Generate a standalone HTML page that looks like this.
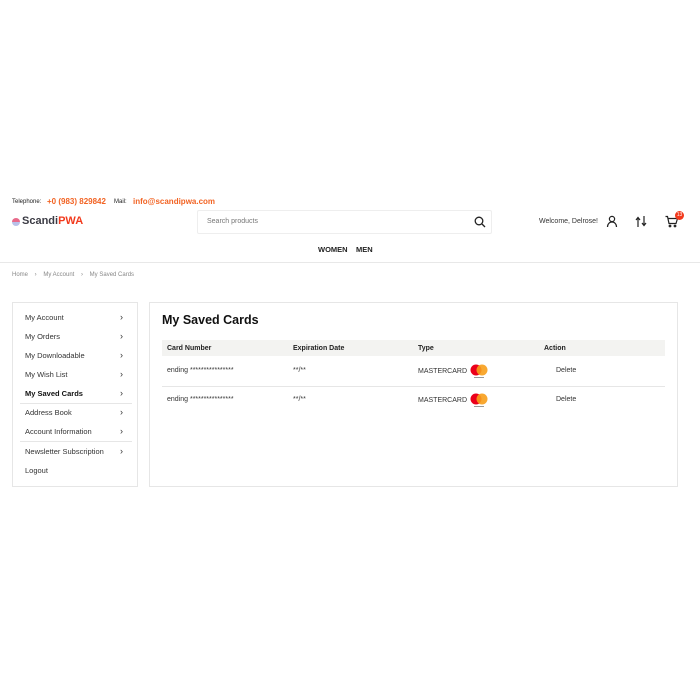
<!DOCTYPE html>
<html><head><style>
body{margin:0;width:700px;height:700px;background:#fff;font-family:"Liberation Sans",sans-serif;color:#222;position:relative;overflow:hidden}
.a{position:absolute;white-space:nowrap}
.or{color:#f26323;font-weight:bold}
.side div.i{position:absolute;left:12px;font-size:7.5px;color:#333}
.chev{position:absolute;left:107px;font-size:9px;color:#333}
.th{position:absolute;top:0;font-size:7px;font-weight:bold;line-height:16px}
.td{position:absolute;font-size:7px;color:#333}
</style></head><body>
<div class="a" style="left:12px;top:199px;font-size:6px;color:#222">Telephone:</div>
<div class="a or" style="left:47px;top:197px;font-size:8px">+0 (983) 829842</div>
<div class="a" style="left:114px;top:199px;font-size:6px">Mail:</div>
<div class="a or" style="left:133px;top:197px;font-size:8px">info@scandipwa.com</div>
<div class="a" style="left:12px;top:218px;width:8px;height:8px;border-radius:50%;background:linear-gradient(#e86a8a 50%,#b8c0e8 50%)"></div>
<div class="a" style="left:22px;top:215px;font-size:11px;font-weight:bold;color:#3b3b44">Scandi<span style="color:#f23a1d">PWA</span></div>
<div class="a" style="left:197px;top:210px;width:295px;height:24px;border:1px solid #eee;border-radius:2px;box-sizing:border-box"></div>
<div class="a" style="left:207px;top:218px;font-size:7px;color:#777">Search products</div>
<svg class="a" style="left:474px;top:216px" width="12" height="12" viewBox="0 0 12 12" fill="none" stroke="#222" stroke-width="1.3"><circle cx="5" cy="5" r="3.8"/><path d="M8 8l3 3"/></svg>
<div class="a" style="left:539px;top:218px;font-size:7px;color:#333">Welcome, Delrose!</div>
<svg class="a" style="left:606px;top:215px" width="12" height="13" viewBox="0 0 12 13" fill="none" stroke="#222" stroke-width="1.2"><circle cx="6" cy="4" r="2.6"/><path d="M1.5 12c0-3 2-5 4.5-5s4.5 2 4.5 5"/></svg>
<svg class="a" style="left:635px;top:215px" width="12" height="13" viewBox="0 0 12 13" fill="none" stroke="#222" stroke-width="1.2"><path d="M3 12V3M1 5l2-2.5L5 5M9 1v9M7 8l2 2.5L11 8"/></svg>
<svg class="a" style="left:665px;top:215px" width="13" height="13" viewBox="0 0 13 13" fill="none" stroke="#222" stroke-width="1.2"><path d="M0.5 1.5h2l1.5 7h7l1.5-5H3"/><circle cx="5" cy="11" r="0.8"/><circle cx="10" cy="11" r="0.8"/></svg>
<div class="a" style="left:675px;top:211px;width:9px;height:9px;border-radius:50%;background:#f23a1d;color:#fff;font-size:5px;text-align:center;line-height:9px">13</div>
<div class="a" style="left:318px;top:245px;font-size:7.5px;font-weight:bold">WOMEN</div>
<div class="a" style="left:356px;top:245px;font-size:7.5px;font-weight:bold">MEN</div>
<div class="a" style="left:0;top:262px;width:700px;height:1px;background:#e8e8e8"></div>
<div class="a" style="left:12px;top:272px;font-size:6px;color:#888">Home &nbsp;&nbsp;&nbsp;›&nbsp;&nbsp;&nbsp; My Account &nbsp;&nbsp;&nbsp;›&nbsp;&nbsp;&nbsp; My Saved Cards</div>
<div class="a side" style="left:12px;top:302px;width:126px;height:185px;border:1px solid #e6e6e6;box-sizing:border-box">
<div class="i" style="top:10px">My Account</div><div class="chev" style="top:9px">›</div>
<div class="i" style="top:29px">My Orders</div><div class="chev" style="top:28px">›</div>
<div class="i" style="top:48px">My Downloadable</div><div class="chev" style="top:47px">›</div>
<div class="i" style="top:67px">My Wish List</div><div class="chev" style="top:66px">›</div>
<div class="i" style="top:86px;font-weight:bold;color:#111">My Saved Cards</div><div class="chev" style="top:85px">›</div>
<div style="position:absolute;left:7px;top:100px;width:112px;height:1px;background:#e6e6e6"></div>
<div class="i" style="top:105px">Address Book</div><div class="chev" style="top:104px">›</div>
<div class="i" style="top:124px">Account Information</div><div class="chev" style="top:123px">›</div>
<div style="position:absolute;left:7px;top:138px;width:112px;height:1px;background:#e6e6e6"></div>
<div class="i" style="top:144px">Newsletter Subscription</div><div class="chev" style="top:143px">›</div>
<div class="i" style="top:163px">Logout</div>
</div>
<div class="a" style="left:149px;top:302px;width:529px;height:185px;border:1px solid #e6e6e6;box-sizing:border-box"></div>
<div class="a" style="left:162px;top:313px;font-size:12.5px;font-weight:bold;color:#111">My Saved Cards</div>
<div class="a" style="left:162px;top:340px;width:503px;height:16px;background:#f3f3f1">
<div class="th" style="left:5px;top:1px">Card Number</div><div class="th" style="left:131px;top:1px">Expiration Date</div><div class="th" style="left:256px;top:1px">Type</div><div class="th" style="left:382px;top:1px">Action</div></div>
<div class="a" style="left:162px;top:386px;width:503px;height:1px;background:#e6e6e6"></div>
<div class="td" style="left:167px;top:367px">ending ****************</div>
<div class="td" style="left:293px;top:367px">**/**</div>
<div class="td" style="left:418px;top:368px">MASTERCARD</div>
<div class="td" style="left:556px;top:367px">Delete</div>
<div class="td" style="left:167px;top:396px">ending ****************</div>
<div class="td" style="left:293px;top:396px">**/**</div>
<div class="td" style="left:418px;top:397px">MASTERCARD</div>
<div class="td" style="left:556px;top:396px">Delete</div>
<svg class="a" style="left:469px;top:363px" width="20" height="17"><circle cx="7" cy="7" r="5.5" fill="#eb001b"/><circle cx="13" cy="7" r="5.5" fill="#f79e1b" fill-opacity=".9"/><rect x="5" y="14" width="10" height="1" fill="#999"/></svg>
<svg class="a" style="left:469px;top:392px" width="20" height="17"><circle cx="7" cy="7" r="5.5" fill="#eb001b"/><circle cx="13" cy="7" r="5.5" fill="#f79e1b" fill-opacity=".9"/><rect x="5" y="14" width="10" height="1" fill="#999"/></svg>
</body></html>
